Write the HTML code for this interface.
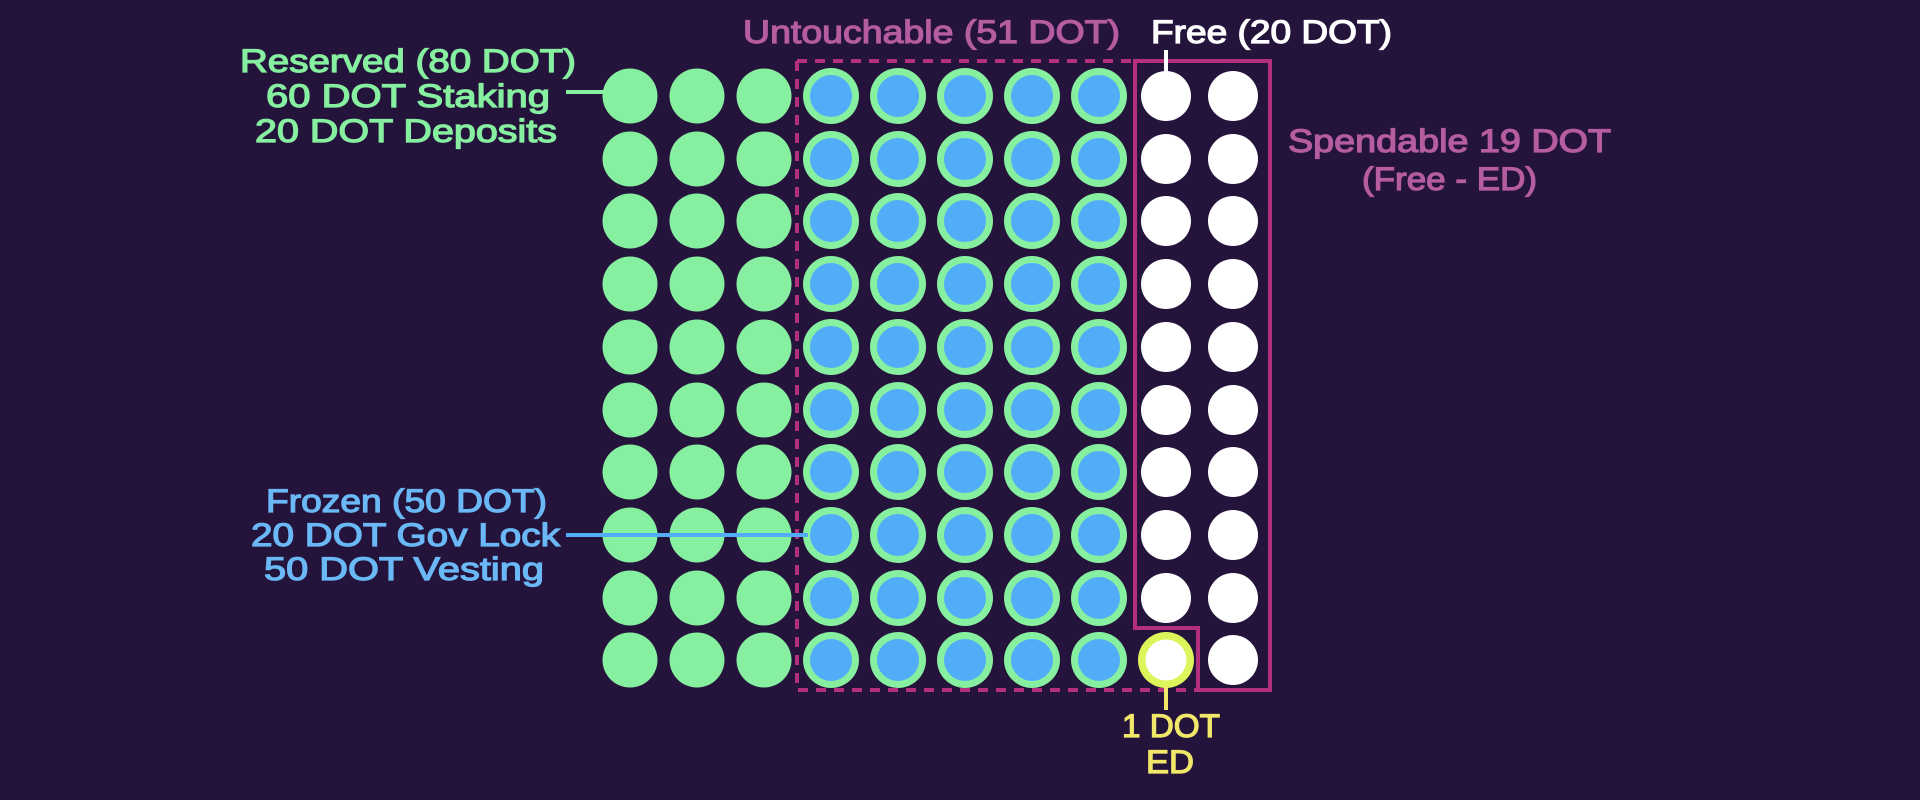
<!DOCTYPE html>
<html><head><meta charset="utf-8"><style>
html,body{margin:0;padding:0;background:#24133a;}
svg{display:block}
text{font-family:"Liberation Sans",sans-serif;font-size:32px;stroke-width:1.2px;}
</style></head><body>
<svg width="1920" height="800" viewBox="0 0 1920 800" xmlns="http://www.w3.org/2000/svg" xmlns:xlink="http://www.w3.org/1999/xlink">
<defs>
<g id="G"><circle cx="0" cy="0" r="27.5" fill="#86efa0"/></g>
<g id="B"><circle cx="0" cy="0" r="28" fill="#86efa0"/><circle cx="0" cy="0" r="21" fill="#52adf9"/></g>
<g id="W"><circle cx="0" cy="0" r="25" fill="#fff"/></g>
<g id="R">
<use href="#G" xlink:href="#G" x="630"/><use href="#G" xlink:href="#G" x="697"/><use href="#G" xlink:href="#G" x="764"/>
<use href="#B" xlink:href="#B" x="831"/><use href="#B" xlink:href="#B" x="898"/><use href="#B" xlink:href="#B" x="965"/><use href="#B" xlink:href="#B" x="1032"/><use href="#B" xlink:href="#B" x="1099"/>
<use href="#W" xlink:href="#W" x="1166"/><use href="#W" xlink:href="#W" x="1233"/>
</g>
<g id="R9">
<use href="#G" xlink:href="#G" x="630"/><use href="#G" xlink:href="#G" x="697"/><use href="#G" xlink:href="#G" x="764"/>
<use href="#B" xlink:href="#B" x="831"/><use href="#B" xlink:href="#B" x="898"/><use href="#B" xlink:href="#B" x="965"/><use href="#B" xlink:href="#B" x="1032"/><use href="#B" xlink:href="#B" x="1099"/>
<circle cx="1166" cy="0" r="28" fill="#dcf55a"/><circle cx="1166" cy="0" r="20.5" fill="#fff"/>
<use href="#W" xlink:href="#W" x="1233"/>
</g>
</defs>
<rect width="1920" height="800" fill="#24133a"/>
<use href="#R" xlink:href="#R" y="96"/>
<use href="#R" xlink:href="#R" y="159"/>
<use href="#R" xlink:href="#R" y="221"/>
<use href="#R" xlink:href="#R" y="284"/>
<use href="#R" xlink:href="#R" y="347"/>
<use href="#R" xlink:href="#R" y="410"/>
<use href="#R" xlink:href="#R" y="472"/>
<use href="#R" xlink:href="#R" y="535"/>
<use href="#R" xlink:href="#R" y="598"/>
<use href="#R9" xlink:href="#R9" y="660"/>
<path d="M797 61 H1135 M797 61 V690 H1197" fill="none" stroke="#b5307c" stroke-width="4" stroke-dasharray="10 8"/>
<path d="M1135 61 V628 H1198 V690 H1270 V61 Z" fill="none" stroke="#b5307c" stroke-width="4"/>
<line x1="566" y1="92" x2="604" y2="92" stroke="#86efa0" stroke-width="4"/>
<line x1="566" y1="535" x2="808" y2="535" stroke="#52adf9" stroke-width="4"/>
<line x1="1166" y1="50" x2="1166" y2="72" stroke="#fff" stroke-width="4"/>
<line x1="1166" y1="686" x2="1166" y2="710" stroke="#f1e86a" stroke-width="4"/>
<g fill="#86efa0" stroke="#86efa0">
<text x="240" y="72" textLength="336" lengthAdjust="spacingAndGlyphs">Reserved (80 DOT)</text>
<text x="266" y="107" textLength="284" lengthAdjust="spacingAndGlyphs">60 DOT Staking</text>
<text x="255" y="142" textLength="302" lengthAdjust="spacingAndGlyphs">20 DOT Deposits</text>
</g>
<g fill="#6ab8f5" stroke="#6ab8f5">
<text x="266" y="512" textLength="281" lengthAdjust="spacingAndGlyphs">Frozen (50 DOT)</text>
<text x="251" y="546" textLength="309" lengthAdjust="spacingAndGlyphs">20 DOT Gov Lock</text>
<text x="264" y="580" textLength="280" lengthAdjust="spacingAndGlyphs">50 DOT Vesting</text>
</g>
<g fill="#b65ca0" stroke="#b65ca0">
<text x="743" y="43" textLength="377" lengthAdjust="spacingAndGlyphs">Untouchable (51 DOT)</text>
<text x="1288" y="152" textLength="323" lengthAdjust="spacingAndGlyphs">Spendable 19 DOT</text>
<text x="1362" y="190" textLength="175" lengthAdjust="spacingAndGlyphs">(Free - ED)</text>
</g>
<text x="1151" y="43" textLength="241" lengthAdjust="spacingAndGlyphs" fill="#fff" stroke="#fff">Free (20 DOT)</text>
<g fill="#f1e86a" stroke="#f1e86a">
<text x="1122" y="737" textLength="98" lengthAdjust="spacingAndGlyphs">1 DOT</text>
<text x="1146" y="773" textLength="48" lengthAdjust="spacingAndGlyphs">ED</text>
</g>
</svg>
</body></html>
